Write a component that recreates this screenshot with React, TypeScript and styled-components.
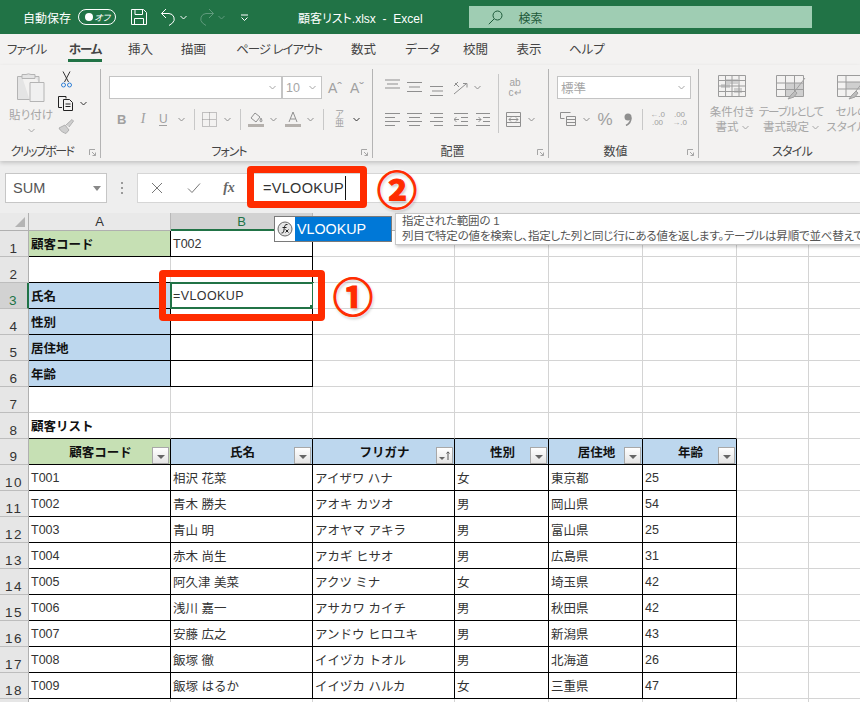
import React from 'react';
import styled, { createGlobalStyle } from 'styled-components';

const JP = `"Liberation Sans", "Noto Sans CJK JP", sans-serif`;

const GlobalStyle = createGlobalStyle`
  html, body {
    margin: 0;
    padding: 0;
    background: #fff;
    font-family: ${JP};
  }
`;

const Screen = styled.div`
  position: relative;
  width: 860px;
  height: 702px;
  overflow: hidden;
  background: #fff;
  color: #222;
  font-family: ${JP};
  font-feature-settings: "palt";
`;

/* title bar */
const TitleBar = styled.div`
  display: flex;
  align-items: center;
  height: 34px;
  padding-left: 23px;
  background: #217346;
  color: #fff;
`;

const TitleText = styled.span<{ $ml?: number }>`
  margin-left: ${p => p.$ml ?? 0}px;
  font-size: 12px;
  white-space: pre;
`;

const Toggle = styled.div`
  display: flex;
  align-items: center;
  justify-content: space-between;
  box-sizing: border-box;
  width: 38px;
  height: 16px;
  margin-left: 7px;
  padding: 0 5px 0 6px;
  border: 1px solid #fff;
  border-radius: 8px;
  font-size: 9px;
  font-style: italic;
`;

const ToggleDot = styled.i`
  width: 8px;
  height: 8px;
  border-radius: 50%;
  background: #fff;
`;

const Ic = styled.svg<{ $ml?: number; $c?: string }>`
  display: block;
  flex: none;
  margin-left: ${p => p.$ml ?? 0}px;
  fill: none;
  stroke: ${p => p.$c ?? 'currentColor'};
  stroke-width: 1;
`;

const SearchBox = styled.div`
  display: flex;
  align-items: center;
  box-sizing: border-box;
  width: 343px;
  height: 22px;
  margin-left: 46px;
  padding-left: 19px;
  background: #9fcdb3;
  color: #1d5a3a;
`;

const SearchLabel = styled.span`
  margin-left: 16px;
  font-size: 12px;
`;

/* tabs */
const TabBar = styled.div`
  display: flex;
  height: 31px;
  padding-left: 7px;
  background: #f3f2f1;
`;

const Tab = styled.div<{ $active?: boolean; $w: number; $ml: number; $ls: number }>`
  flex: none;
  box-sizing: border-box;
  width: ${p => p.$w}px;
  height: 28px;
  margin-left: ${p => p.$ml}px;
  padding-top: 8px;
  font-size: 12.5px;
  line-height: 16px;
  letter-spacing: ${p => p.$ls}px;
  text-align: center;
  color: #444;
  white-space: pre;
  font-weight: ${p => (p.$active ? 700 : 400)};
  border-bottom: 3px solid ${p => (p.$active ? '#217346' : 'transparent')};
`;

/* ribbon */
const Ribbon = styled.div`
  position: relative;
  display: flex;
  height: 96px;
  background: #f3f2f1;
  box-shadow: 0 2px 4px rgba(0, 0, 0, 0.18);
`;

const RibbonSep = styled.div`
  flex: none;
  align-self: center;
  width: 1px;
  height: 89px;
  background: #b4b4b4;
`;

const Group = styled.div<{ $w: number }>`
  position: relative;
  flex: none;
  display: flex;
  flex-direction: column;
  width: ${p => p.$w}px;
`;

const GroupBody = styled.div<{ $pl?: number }>`
  flex: 1;
  display: flex;
  padding: 11px 0 0 ${p => p.$pl ?? 0}px;
`;

const GroupLabel = styled.div<{ $pr?: number; $ls?: number }>`
  height: 18px;
  padding-right: ${p => p.$pr ?? 0}px;
  line-height: 18px;
  text-align: center;
  font-size: 12px;
  letter-spacing: ${p => p.$ls ?? 0}px;
  color: #444;
  white-space: nowrap;
`;

const Launcher = styled.svg`
  position: absolute;
  right: 4px;
  bottom: 5px;
  fill: none;
  stroke: #a6a6a6;
`;

const Stack = styled.div<{ $w?: number }>`
  display: flex;
  flex-direction: column;
  gap: 9px;
  flex: none;
  width: ${p => (p.$w ? `${p.$w}px` : 'auto')};
`;

const ToolRow = styled.div<{ $h: number }>`
  display: flex;
  align-items: center;
  height: ${p => p.$h}px;
  color: #8f8f8f;
`;

const Combo = styled.div<{ $w: number; $ml?: number }>`
  display: flex;
  align-items: center;
  justify-content: space-between;
  box-sizing: border-box;
  width: ${p => p.$w}px;
  height: 23px;
  margin-left: ${p => p.$ml ?? 0}px;
  padding: 0 5px 0 3px;
  background: #fff;
  border: 1px solid #c4c4c4;
  font-size: 12.5px;
  color: #a6a6a6;
`;

const Glyph = styled.span<{ $w: number; $ml?: number; $size?: number; $serif?: boolean; $bold?: boolean; $italic?: boolean; $under?: boolean }>`
  flex: none;
  width: ${p => p.$w}px;
  margin-left: ${p => p.$ml ?? 0}px;
  text-align: center;
  font-size: ${p => p.$size ?? 13}px;
  line-height: 1;
  color: #a0a0a0;
  white-space: nowrap;
  font-family: ${p => (p.$serif ? '"Liberation Serif", serif' : JP)};
  font-weight: ${p => (p.$bold ? 700 : 400)};
  font-style: ${p => (p.$italic ? 'italic' : 'normal')};
  border-bottom: ${p => (p.$under ? '1px solid #a0a0a0' : 'none')};
`;

const RowSep = styled.div<{ $ml: number }>`
  flex: none;
  width: 1px;
  height: 21px;
  margin-left: ${p => p.$ml}px;
  background: #c8c8c8;
`;

const TallSep = styled.div`
  flex: none;
  width: 1px;
  height: 59px;
  margin-top: -2px;
  background: #c8c8c8;
`;

const Paste = styled.div`
  display: flex;
  flex-direction: column;
  align-items: center;
  flex: none;
  width: 42px;
  margin: -4px 0 0 10px;
  color: #a6a6a6;
`;

const PasteText = styled.span`
  margin: 4px 0 6px;
  font-size: 11.5px;
  white-space: nowrap;
`;

const SideTools = styled.div`
  display: flex;
  flex-direction: column;
  margin: -5px 0 0 6px;
  gap: 8px;
`;

const SideRow = styled.div`
  display: flex;
  align-items: center;
`;

const StyleButton = styled.div<{ $w: number; $ml: number }>`
  flex: none;
  display: flex;
  flex-direction: column;
  align-items: center;
  width: ${p => p.$w}px;
  margin: -1px 0 0 ${p => p.$ml}px;
  font-size: 11.5px;
  line-height: 15px;
  color: #a6a6a6;
  white-space: nowrap;
`;

const StyleIconBox = styled.div`
  height: 26px;
  margin-bottom: 4px;
`;

const CaptionLine = styled.div<{ $ls?: number }>`
  display: flex;
  align-items: center;
  gap: 3px;
  letter-spacing: ${p => p.$ls ?? 0}px;
`;

/* formula bar */
const FormulaBar = styled.div`
  display: flex;
  align-items: flex-start;
  box-sizing: border-box;
  height: 52px;
  padding: 12px 0 0 5px;
  background: #eeeeee;
`;

const NameBox = styled.div`
  display: flex;
  align-items: center;
  justify-content: space-between;
  box-sizing: border-box;
  width: 102px;
  height: 30px;
  padding: 0 5px 0 7px;
  background: #fff;
  border: 1px solid #c6c6c6;
  font-size: 14.5px;
  color: #555;
`;

const Grip = styled.div`
  width: 2px;
  height: 12px;
  margin: 9px 14px 0 14px;
  background: repeating-linear-gradient(to bottom, #9a9a9a 0 2px, transparent 2px 5px);
`;

const FormulaInput = styled.div`
  flex: 1;
  display: flex;
  align-items: center;
  height: 30px;
  padding-left: 13px;
  background: #fff;
  border: 1px solid #d6d6d6;
  border-right: none;
  box-sizing: border-box;
  color: #666;
`;

const FxMark = styled.span<{ $ml: number; $w: number }>`
  width: ${p => p.$w}px;
  margin-left: ${p => p.$ml}px;
  font: italic 700 14px "Liberation Serif", serif;
  text-align: center;
  color: #666;
`;

const FormulaText = styled.span`
  margin-left: 26px;
  font-size: 14.5px;
  letter-spacing: 0.3px;
  color: #333;
`;

const Caret = styled.i`
  width: 1px;
  height: 24px;
  margin-left: 1px;
  background: #111;
`;

/* sheet */
const Sheet = styled.div`
  display: grid;
  grid-template-columns: 29px 142px 142px 142px 94px 94px 94px 72px 72px;
  grid-template-rows: 18px;
  grid-auto-rows: 26px;
  width: 975px;
`;

const CornerCell = styled.div`
  display: flex;
  align-items: flex-end;
  justify-content: flex-end;
  box-sizing: border-box;
  padding: 0 3px 3px 0;
  background: #e9e9e9;
  border-right: 1px solid #b0b0b0;
  border-bottom: 1px solid #b0b0b0;
`;

const CornerMark = styled.i`
  width: 0;
  height: 0;
  border-left: 10px solid transparent;
  border-bottom: 10px solid #b4b4b4;
`;

const ColHead = styled.div<{ $on?: boolean }>`
  box-sizing: border-box;
  text-align: center;
  font-size: 13px;
  line-height: 17px;
  background: ${p => (p.$on ? '#d2d2d2' : '#e9e9e9')};
  color: ${p => (p.$on ? '#217346' : '#333')};
  border-right: 1px solid #b8b8b8;
  border-bottom: ${p => (p.$on ? '2px solid #217346' : '1px solid #b0b0b0')};
`;

const RowHead = styled.div<{ $on?: boolean }>`
  display: flex;
  align-items: flex-end;
  justify-content: center;
  box-sizing: border-box;
  font-size: 13.5px;
  letter-spacing: 1.6px;
  line-height: 15px;
  background: ${p => (p.$on ? '#d2d2d2' : '#e6e6e6')};
  color: ${p => (p.$on ? '#217346' : '#333')};
  border-right: ${p => (p.$on ? '2px solid #217346' : '1px solid #b0b0b0')};
  border-bottom: 1px solid #bdbdbd;
`;

const Cell = styled.div<{ $fill?: string; $bold?: boolean; $center?: boolean; $right?: boolean; $bottom?: boolean }>`
  position: relative;
  display: flex;
  align-items: center;
  justify-content: ${p => (p.$center ? 'center' : 'flex-start')};
  box-sizing: border-box;
  padding-left: 2px;
  font-size: 12.5px;
  white-space: nowrap;
  font-feature-settings: normal;
  font-weight: ${p => (p.$bold ? 700 : 400)};
  background: ${p => p.$fill ?? '#fff'};
  color: ${p => (p.$bold ? '#111' : '#333')};
  border-right: 1px solid ${p => (p.$right ? '#000' : '#d4d4d4')};
  border-bottom: 1px solid ${p => (p.$bottom ? '#000' : '#d4d4d4')};
`;

const FilterButton = styled.div`
  position: absolute;
  right: 1px;
  bottom: 0;
  display: flex;
  align-items: center;
  justify-content: center;
  gap: 1px;
  box-sizing: border-box;
  width: 17px;
  height: 17px;
  background: linear-gradient(#ffffff, #e4e4e4);
  border: 1px solid #a8a8a8;
`;

const FilterArrow = styled.i`
  width: 0;
  height: 0;
  margin-top: 2px;
  border-left: 4px solid transparent;
  border-right: 4px solid transparent;
  border-top: 4px solid #666;
`;

const SortedArrow = styled(FilterArrow)`
  border-left-width: 3px;
  border-right-width: 3px;
  border-top-width: 3px;
  margin-top: 6px;
`;

const SelectionBox = styled.div`
  position: absolute;
  left: -1px;
  top: -1px;
  right: -2px;
  bottom: -1px;
  border: 2px solid #217346;
`;

const SelectionHandle = styled.i`
  position: absolute;
  right: -3px;
  bottom: -3px;
  width: 5px;
  height: 5px;
  background: #217346;
`;

const CellEntry = styled.span`
  letter-spacing: 0.4px;
`;

/* things lying over the sheet */
const RedFrame = styled.div<{ $x: number; $y: number; $w: number; $h: number }>`
  position: absolute;
  left: ${p => p.$x}px;
  top: ${p => p.$y}px;
  width: ${p => p.$w}px;
  height: ${p => p.$h}px;
  box-sizing: border-box;
  border: 7px solid #ff2c00;
  border-radius: 4px;
`;

const Badge = styled.div<{ $x: number; $y: number }>`
  position: absolute;
  left: ${p => p.$x}px;
  top: ${p => p.$y}px;
  width: 46px;
  height: 46px;
  line-height: 46px;
  text-align: center;
  font-size: 40px;
  font-weight: 700;
  font-family: "Noto Sans CJK JP", sans-serif;
  color: #ff2c00;
  -webkit-text-stroke: 1.2px #ff2c00;
  text-shadow: 0 0 3px #fff, 0 0 3px #fff, 1px 2px 3px rgba(0, 0, 0, 0.35);
`;

const Suggest = styled.div`
  position: absolute;
  left: 274px;
  top: 216px;
  display: flex;
  box-sizing: border-box;
  width: 118px;
  height: 26px;
  background: #fff;
  border: 1px solid #7a7a7a;
`;

const SuggestIcon = styled.div`
  display: flex;
  align-items: center;
  justify-content: center;
  width: 20px;
`;

const SuggestName = styled.div`
  flex: 1;
  padding-left: 2px;
  line-height: 24px;
  background: #0078d7;
  color: #fff;
  font-size: 14.3px;
`;

const Tip = styled.div`
  position: absolute;
  left: 395px;
  top: 213px;
  box-sizing: border-box;
  width: 560px;
  height: 32px;
  padding: 0 0 0 6px;
  background: #fff;
  border: 1px solid #c8c8c8;
  box-shadow: 1px 2px 3px rgba(0, 0, 0, 0.2);
  font-size: 11.5px;
  letter-spacing: -0.2px;
  line-height: 15px;
  color: #555;
  white-space: nowrap;
`;

const Chev = ({ ml, c }: { ml?: number; c?: string }) => (
  <Ic $ml={ml} $c={c} width="7" height="5" viewBox="0 0 7 5"><path d="M.5 1 3.5 4 6.5 1" /></Ic>
);

const Lines = ({ ml, rows, w = 15, top, step }: { ml?: number; rows: number[][]; w?: number; top: number; step: number }) => (
  <Ic $ml={ml} width={w} height="18" viewBox={`0 0 ${w} 18`}>
    {rows.map((r, i) => <path key={i} d={`M${r[0]} ${top + i * step}H${r[1]}`} />)}
  </Ic>
);

const LaunchIcon = () => (
  <Launcher width="7" height="7" viewBox="0 0 7 7"><path d="M.5 6V.5H6M3 3l3.5 3.5M6.5 3.5v3h-3" /></Launcher>
);

const SAMPLE_ROWS = [
  ['T001', '相沢 花菜', 'アイザワ ハナ', '女', '東京都', '25'],
  ['T002', '青木 勝夫', 'アオキ カツオ', '男', '岡山県', '54'],
  ['T003', '青山 明', 'アオヤマ アキラ', '男', '富山県', '25'],
  ['T004', '赤木 尚生', 'アカギ ヒサオ', '男', '広島県', '31'],
  ['T005', '阿久津 美菜', 'アクツ ミナ', '女', '埼玉県', '42'],
  ['T006', '浅川 嘉一', 'アサカワ カイチ', '男', '秋田県', '42'],
  ['T007', '安藤 広之', 'アンドウ ヒロユキ', '男', '新潟県', '43'],
  ['T008', '飯塚 徹', 'イイヅカ トオル', '男', '北海道', '26'],
  ['T009', '飯塚 はるか', 'イイヅカ ハルカ', '女', '三重県', '47'],
];

const HEADERS = ['顧客コード', '氏名', 'フリガナ', '性別', '居住地', '年齢'];
const TABS = [
  { label: 'ファイル', w: 38, ml: 0, ls: -1 },
  { label: 'ホーム', w: 34, ml: 23, ls: -1 },
  { label: '挿入', w: 25, ml: 26, ls: 0 },
  { label: '描画', w: 25, ml: 28, ls: 0 },
  { label: 'ページ レイアウト', w: 85, ml: 30, ls: -1 },
  { label: '数式', w: 25, ml: 30, ls: 0 },
  { label: 'データ', w: 37, ml: 28, ls: 0 },
  { label: '校閲', w: 25, ml: 22, ls: 0 },
  { label: '表示', w: 26, ml: 28, ls: 0 },
  { label: 'ヘルプ', w: 32, ml: 27, ls: 0 },
];
const GREEN = '#c6e0b4';
const BLUE = '#bdd7ee';

const blanks = (n: number) =>
  Array.from({ length: n }, (_, i) => <Cell key={`b${i}`} />);

const App: React.FC = () => {
  return (
    <Screen>
      <GlobalStyle />
      <TitleBar>
        <TitleText>自動保存</TitleText>
        <Toggle><ToggleDot />オフ</Toggle>
        <Ic $ml={15} width="16" height="16" viewBox="0 0 16 16">
          <path d="M.5.5h12l3 3v12H.5zM4 .5v5h7.5v-5M3.5 15.5v-6h9v6" />
        </Ic>
        <Ic $ml={13} width="16" height="18" viewBox="0 0 16 18" strokeWidth="1.3">
          <path d="M6 1 1.5 5.500 6 10M1.5 5.500H9a5.500 5.500 0 0 1 3.500 9.500L9 17.500" />
        </Ic>
        <Chev ml={4} />
        <Ic $ml={12} $c="#5f9a7c" width="16" height="18" viewBox="0 0 16 18" strokeWidth="1.3">
          <path d="M10 1l4.500 4.500L10 10M14.500 5.500H7a5.500 5.500 0 0 0-3.500 9.500L7 17.500" />
        </Ic>
        <Chev ml={3} c="#5f9a7c" />
        <Ic $ml={16} width="7" height="7" viewBox="0 0 7 7"><path d="M0 1h7M.5 3.500l3 3 3-3" /></Ic>
        <TitleText $ml={50}>顧客リスト.xlsx  -  Excel</TitleText>
        <SearchBox>
          <Ic width="15" height="15" viewBox="0 0 15 15"><circle cx="9.500" cy="5.500" r="4.500" /><path d="M6 9 .8 14.200" /></Ic>
          <SearchLabel>検索</SearchLabel>
        </SearchBox>
      </TitleBar>

      <TabBar>
        {TABS.map(t => <Tab key={t.label} $w={t.w} $ml={t.ml} $ls={t.ls} $active={t.label === 'ホーム'}>{t.label}</Tab>)}
      </TabBar>

      <Ribbon>
        <Group $w={100}>
          <GroupBody>
            <Paste>
              <Ic width="28" height="30" viewBox="0 0 28 30" $c="#b4b4b4">
                <path d="M5 4.500H.5v23h12M18 4.500h4v6M5 2.500h4a4 2.500 0 0 1 5 0h4v4H5z" fill="#e4e4e4" />
                <path d="M13 10.500h14v19H13z" fill="#f0f0f0" />
              </Ic>
              <PasteText>貼り付け</PasteText>
              <Chev />
            </Paste>
            <SideTools>
              <SideRow>
                <Ic $ml={3} width="11" height="17" viewBox="0 0 11 17" $c="#333">
                  <path d="M2 .5 7.500 11M9 .5 3.500 11" />
                  <circle cx="2.500" cy="14" r="2" stroke="#2f7fd6" /><circle cx="8.500" cy="14" r="2" stroke="#2f7fd6" />
                </Ic>
              </SideRow>
              <SideRow>
                <Ic width="16" height="15" viewBox="0 0 16 15" $c="#222">
                  <path d="M4 11.500H.5V.5H8v2M5.500 3.500h6l3 3v8h-9zM7.500 8h5M7.500 10.500h5" />
                </Ic>
                <Chev ml={6} c="#333" />
              </SideRow>
              <SideRow>
                <Ic width="16" height="15" viewBox="0 0 16 15" $c="#b0b0b0">
                  <path d="M1 9l6-3 4 5-3 3.500C6 14 2 12 1 9z" fill="#cfcfcf" /><path d="M8 6l6-5.500 1.500 1.500L11 8" fill="#cfcfcf" />
                </Ic>
              </SideRow>
            </SideTools>
          </GroupBody>
          <GroupLabel $pr={16} $ls={-1.6}>クリップボード</GroupLabel>
          <LaunchIcon />
        </Group>
        <RibbonSep />

        <Group $w={271}>
          <GroupBody $pl={8}>
            <Stack>
              <ToolRow $h={23}>
                <Combo $w={173}><span /><Chev c="#a6a6a6" /></Combo>
                <Combo $w={40}>10<Chev c="#a6a6a6" /></Combo>
                <Glyph $w={14} $ml={6} $size={14}>Aˆ</Glyph>
                <Glyph $w={14} $ml={8} $size={14}>Aˇ</Glyph>
              </ToolRow>
              <ToolRow $h={22}>
                <Glyph $w={8} $ml={8} $bold>B</Glyph>
                <Glyph $w={6} $ml={15} $italic $serif $size={14}>I</Glyph>
                <Glyph $w={8} $ml={13} $size={12} $under>U</Glyph>
                <Chev ml={11} />
                <RowSep $ml={9} />
                <Ic $ml={7} width="15" height="15" viewBox="0 0 15 15" strokeDasharray="1 1">
                  <path d="M.5.5h14v14H.5zM.5 7.500h14M7.500.5v14" />
                </Ic>
                <Chev ml={7} />
                <RowSep $ml={9} />
                <Ic $ml={7} width="16" height="16" viewBox="0 0 16 16">
                  <path d="M3 7l4-5 5 4-4 5zM13 7s1 2 1 3-2 1-2 0 1-3 1-3z" />
                  <path d="M0 14.500h16" stroke="#b5b1ad" strokeWidth="3" />
                </Ic>
                <Chev ml={6} />
                <Ic $ml={8} width="16" height="16" viewBox="0 0 16 16">
                  <path d="M4 11 8 1l4 10M5.500 8h5" />
                  <path d="M0 14.500h16" stroke="#b5b1ad" strokeWidth="3" />
                </Ic>
                <Chev ml={6} />
                <RowSep $ml={9} />
                <Glyph $w={9} $ml={11} $size={9}>ア<br />亜</Glyph>
                <Chev ml={9} c="#333" />
              </ToolRow>
            </Stack>
          </GroupBody>
          <GroupLabel $pr={15} $ls={-1}>フォント</GroupLabel>
          <LaunchIcon />
        </Group>
        <RibbonSep />

        <Group $w={175}>
          <GroupBody $pl={12}>
            <Stack $w={113}>
              <ToolRow $h={23}>
                <Lines top={1} step={4} rows={[[0, 15], [2, 13], [0, 15]]} />
                <Lines ml={7} top={3.5} step={4.5} rows={[[0, 15], [2, 13], [0, 15]]} />
                <Lines ml={8} w={13} top={7.5} step={4.5} rows={[[0, 13], [2, 13], [0, 13]]} />
                <Ic $ml={10} width="17" height="14" viewBox="0 0 17 14"><path d="M1 13 13 3M10 2.500h4v4M2 2l4 4M5 1 1 5" /></Ic>
                <Chev ml={4} />
              </ToolRow>
              <ToolRow $h={22}>
                <Lines top={3.5} step={4} rows={[[0, 15], [0, 10], [0, 15], [0, 10]]} />
                <Lines ml={7} top={3.5} step={4} rows={[[0, 15], [2, 13], [0, 15], [2, 13]]} />
                <Lines ml={8} w={13} top={3.5} step={4} rows={[[0, 13], [4, 13], [0, 13], [4, 13]]} />
                <Ic $ml={11} width="14" height="15" viewBox="0 0 14 15"><path d="M0 1.500h14M7 5.500h7M7 9.500h7M0 13.500h14M5 7.500H0M2.500 5 0 7.500 2.500 10" /></Ic>
                <Ic $ml={8} width="14" height="15" viewBox="0 0 14 15"><path d="M0 1.500h14M7 5.500h7M7 9.500h7M0 13.500h14M0 7.500h5M2.500 5 5 7.500 2.500 10" /></Ic>
              </ToolRow>
            </Stack>
            <TallSep />
            <Stack>
              <ToolRow $h={23}>
                <Glyph $w={14} $ml={9} $size={10}>ab<br />c↵</Glyph>
              </ToolRow>
              <ToolRow $h={22}>
                <Ic $ml={7} width="15" height="15" viewBox="0 0 15 15"><path d="M.5.5h14v14H.5zM.5 4.500h14M.5 10.500h14M3 7.500h9M5 5.500l-2 2 2 2M10 5.500l2 2-2 2" /></Ic>
                <Chev ml={7} />
              </ToolRow>
            </Stack>
          </GroupBody>
          <GroupLabel $pr={16}>配置</GroupLabel>
          <LaunchIcon />
        </Group>
        <RibbonSep />

        <Group $w={149}>
          <GroupBody $pl={8}>
            <Stack>
              <ToolRow $h={23}>
                <Combo $w={134}>標準<Chev c="#a6a6a6" /></Combo>
              </ToolRow>
              <ToolRow $h={22}>
                <Ic $ml={3} width="16" height="14" viewBox="0 0 16 14"><path d="M.5.5h10M.5 6.500V.5M.5 6.500h4M6.500 4.500h9v9h-9zM6.500 7.500h9M6.500 10.500h9" /></Ic>
                <Chev ml={7} />
                <Glyph $w={16} $ml={7} $size={17}>%</Glyph>
                <Ic $ml={11} width="8" height="13" viewBox="0 0 8 13" $c="#8f8f8f">
                  <circle cx="4" cy="4" r="3.500" fill="#8f8f8f" stroke="none" />
                  <path d="M7 4.500c0 4-2 6.500-5 8" strokeWidth="1.600" />
                </Ic>
                <RowSep $ml={10} />
                <Glyph $w={15} $ml={7} $size={8}>←.0<br />.00</Glyph>
                <Glyph $w={15} $ml={7} $size={8}>.00<br />→.0</Glyph>
              </ToolRow>
            </Stack>
          </GroupBody>
          <GroupLabel $pr={16}>数値</GroupLabel>
          <LaunchIcon />
        </Group>
        <RibbonSep />

        <Group $w={186}>
          <GroupBody>
            <StyleButton $w={46} $ml={10}>
              <StyleIconBox>
                <Ic width="28" height="22" viewBox="0 0 28 22" $c="#9c9c9c">
                  <path d="M8 4h12v5H8zM3 9h9v4H3zM16 13h8v5h-8z" fill="#cfcfcf" stroke="none" />
                  <path d="M.5.5h27v21H.5zM.5 5.500h27M.5 11h27M.5 16.500h27M7.500.5v21M14 .5v21M21 .5v21" />
                </Ic>
              </StyleIconBox>
              <CaptionLine>条件付き</CaptionLine>
              <CaptionLine>書式<Chev c="#a6a6a6" /></CaptionLine>
            </StyleButton>
            <StyleButton $w={64} $ml={4}>
              <StyleIconBox>
                <Ic width="30" height="26" viewBox="0 0 30 26" $c="#9c9c9c">
                  <path d="M10 8h17v13H10z" fill="#cfcfcf" stroke="none" />
                  <path d="M.5.5h27v21H.5zM.5 8h27M.5 14.500h27M9.500.5v21M18.500.5v21" />
                  <path d="M29 3 19 16M15 20l4-4 2 2-3 4-6 2z" fill="#bdbdbd" stroke="#a0a0a0" />
                </Ic>
              </StyleIconBox>
              <CaptionLine $ls={-1.1}>テーブルとして</CaptionLine>
              <CaptionLine>書式設定<Chev c="#a6a6a6" /></CaptionLine>
            </StyleButton>
            <StyleButton $w={48} $ml={5}>
              <StyleIconBox>
                <Ic width="30" height="26" viewBox="0 0 30 26" $c="#9c9c9c">
                  <path d="M9 7h18v7H9z" fill="#cfcfcf" stroke="none" />
                  <path d="M.5.5h27v21H.5zM.5 7h27M.5 14h27M9 .5v21" />
                  <path d="M29 3 19 16M15 20l4-4 2 2-3 4-6 2z" fill="#bdbdbd" stroke="#a0a0a0" />
                </Ic>
              </StyleIconBox>
              <CaptionLine>セルの</CaptionLine>
              <CaptionLine>スタイル<Chev c="#a6a6a6" /></CaptionLine>
            </StyleButton>
          </GroupBody>
          <GroupLabel $ls={-0.8}>スタイル</GroupLabel>
        </Group>
      </Ribbon>

      <FormulaBar>
        <NameBox>
          SUM
          <Ic width="8" height="5" viewBox="0 0 8 5" $c="none"><path d="M0 0h8L4 5z" fill="#888" /></Ic>
        </NameBox>
        <Grip />
        <FormulaInput>
          <Ic width="12" height="12" viewBox="0 0 12 12" $c="#777" strokeWidth="2"><path d="M1 1l10 10M11 1 1 11" /></Ic>
          <Ic $ml={24} width="14" height="12" viewBox="0 0 14 12" $c="#777" strokeWidth="2.6"><path d="M1 6.500l4 4 8-9" /></Ic>
          <FxMark $ml={20} $w={16}>fx</FxMark>
          <FormulaText>=VLOOKUP</FormulaText>
          <Caret />
        </FormulaInput>
      </FormulaBar>

      <Sheet>
        <CornerCell><CornerMark /></CornerCell>
        <ColHead>A</ColHead>
        <ColHead $on>B</ColHead>
        {/* C to H lie under the function list and its tooltip */}
        <ColHead /><ColHead /><ColHead /><ColHead /><ColHead /><ColHead />

        <RowHead>1</RowHead>
        <Cell $fill={GREEN} $bold $right $bottom>顧客コード</Cell>
        <Cell $right $bottom>T002</Cell>
        {blanks(6)}

        <RowHead>2</RowHead>
        <Cell $bottom />
        <Cell $right $bottom />
        {blanks(6)}

        <RowHead $on>3</RowHead>
        <Cell $fill={BLUE} $bold $right $bottom>氏名</Cell>
        <Cell $right $bottom>
          <CellEntry>=VLOOKUP</CellEntry>
          <SelectionBox><SelectionHandle /></SelectionBox>
        </Cell>
        {blanks(6)}

        <RowHead>4</RowHead>
        <Cell $fill={BLUE} $bold $right $bottom>性別</Cell>
        <Cell $right $bottom />
        {blanks(6)}

        <RowHead>5</RowHead>
        <Cell $fill={BLUE} $bold $right $bottom>居住地</Cell>
        <Cell $right $bottom />
        {blanks(6)}

        <RowHead>6</RowHead>
        <Cell $fill={BLUE} $bold $right $bottom>年齢</Cell>
        <Cell $right $bottom />
        {blanks(6)}

        <RowHead>7</RowHead>
        {blanks(8)}

        <RowHead>8</RowHead>
        <Cell $bold $bottom>顧客リスト</Cell>
        <Cell $bottom /><Cell $bottom /><Cell $bottom /><Cell $bottom /><Cell $bottom />
        {blanks(2)}

        <RowHead>9</RowHead>
        {HEADERS.map((h, i) => (
          <Cell key={h} $fill={i === 0 ? GREEN : BLUE} $bold $center $right $bottom>
            {h}
            <FilterButton>
              {i === 2 ? <><SortedArrow /><Ic width="4" height="9" viewBox="0 0 4 9" $c="#555"><path d="M2 9V1M.5 2.500 2 .8l1.500 1.700" /></Ic></> : <FilterArrow />}
            </FilterButton>
          </Cell>
        ))}
        {blanks(2)}

        {SAMPLE_ROWS.map((row, r) => (
          <React.Fragment key={row[0]}>
            <RowHead>{r + 10}</RowHead>
            {row.map((v, c) => <Cell key={c} $right $bottom>{v}</Cell>)}
            {blanks(2)}
          </React.Fragment>
        ))}

        <RowHead />
        {blanks(8)}
      </Sheet>

      <Suggest>
        <SuggestIcon>
          <Ic width="16" height="16" viewBox="0 0 16 16" $c="#666">
            <circle cx="8" cy="8" r="7" fill="#e6e6e6" />
            <path d="M10.500 3.500C8 3 7.500 5 7.200 7.500 6.900 10 6.500 12.500 4.500 12M5.500 6.500h4M8.500 8.500l3 3M11.500 8.500l-3 3" stroke="#222" />
          </Ic>
        </SuggestIcon>
        <SuggestName>VLOOKUP</SuggestName>
      </Suggest>
      <Tip>
        指定された範囲の 1<br />
        列目で特定の値を検索し、指定した列と同じ行にある値を返します。テーブルは昇順で並べ替えておく必要があります。
      </Tip>

      <RedFrame $x={159} $y={270} $w={166} $h={51} />
      <RedFrame $x={247} $y={166} $w={120} $h={42} />
      <Badge $x={330} $y={272}>①</Badge>
      <Badge $x={374} $y={165}>②</Badge>
    </Screen>
  );
};

export default App;
